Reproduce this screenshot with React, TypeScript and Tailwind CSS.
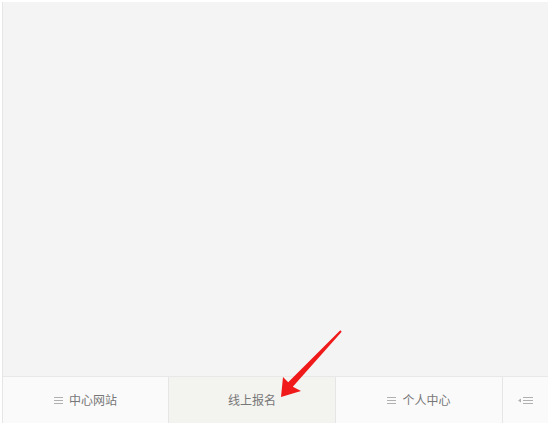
import React from "react";

const font = { fontFamily: '"Microsoft YaHei", "Noto Sans CJK SC", sans-serif' };

function Bars() {
  return (
    <svg width="10" height="9" viewBox="0 0 10 9" className="mr-[5px]">
      <rect x="0" y="1" width="9" height="1" fill="#b0b0b0" />
      <rect x="0" y="4" width="9" height="1" fill="#b0b0b0" />
      <rect x="0" y="7" width="9" height="1" fill="#b0b0b0" />
    </svg>
  );
}

export default function App() {
  return (
    <div className="relative w-[550px] h-[427px] bg-white pt-[2px] pl-[2px] pr-[2px] pb-[4px]" style={font}>
      <div className="flex flex-col h-full border-l border-[#e6e6e6]">
        <div className="flex-1 bg-[#f4f4f4]" />
        <div className="h-[47px] flex border-t border-[#e8e8e8] text-[12px] text-[#777777]">
          <div className="w-[166px] bg-[#fafafa] flex items-center justify-center border-r border-[#e6e6e6]">
            <Bars />
            <span>中心网站</span>
          </div>
          <div className="w-[167px] bg-[#f3f3ef] flex items-center justify-center border-r border-[#e6e6e6]">
            <span>线上报名</span>
          </div>
          <div className="w-[167px] bg-[#fafafa] flex items-center justify-center border-r border-[#e6e6e6]">
            <Bars />
            <span>个人中心</span>
          </div>
          <div className="flex-1 bg-[#fafafa] flex items-center justify-center">
            <svg width="16" height="9" viewBox="0 0 16 9">
              <polygon points="0,4.5 3,2.5 3,6.5" fill="#b0b0b0" />
              <rect x="5" y="1" width="10" height="1" fill="#b0b0b0" />
              <rect x="5" y="4" width="10" height="1" fill="#b0b0b0" />
              <rect x="5" y="7" width="10" height="1" fill="#b0b0b0" />
            </svg>
          </div>
        </div>
      </div>
      <svg className="absolute left-0 top-0 pointer-events-none" width="550" height="427">
        <polygon
          points="281,397 283,377 288.2,382.3 340.3,330.3 341.7,331.7 292.8,386.7 301,391"
          fill="#f01a1a"
        />
      </svg>
    </div>
  );
}
